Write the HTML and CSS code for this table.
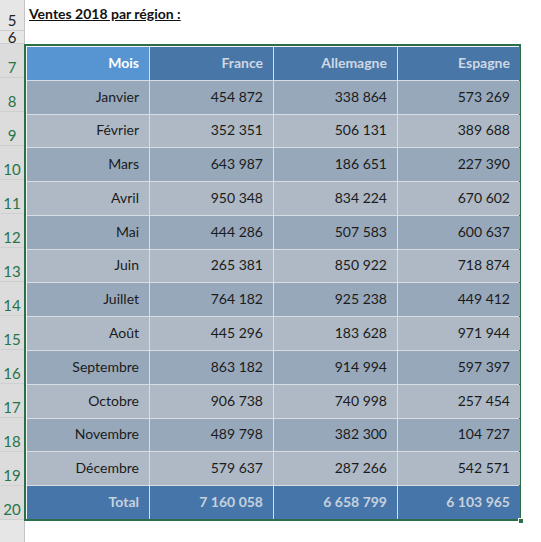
FILE: index.html
```html
<!DOCTYPE html>
<html lang="fr">
<head>
<meta charset="utf-8">
<title>Ventes 2018 par région</title>
<link rel="stylesheet" href="styles.css">
</head>
<body>
<div class="sheet">
  <div class="rowheads">
    <div class="rh r5">5</div>
    <div class="rh r6">6</div>
    <div class="rh sel r7">7</div>
    <div class="rh sel">8</div>
    <div class="rh sel">9</div>
    <div class="rh sel">10</div>
    <div class="rh sel">11</div>
    <div class="rh sel">12</div>
    <div class="rh sel">13</div>
    <div class="rh sel">14</div>
    <div class="rh sel">15</div>
    <div class="rh sel">16</div>
    <div class="rh sel">17</div>
    <div class="rh sel">18</div>
    <div class="rh sel">19</div>
    <div class="rh sel">20</div>
    <div class="rh r21">21</div>
  </div>
  <div class="main">
    <div class="title-row"><span class="title">Ventes 2018 par région :</span></div>
    <div class="blank-row"></div>
    <div class="table-wrap">
      <div class="table">
        <div class="c h first">Mois</div><div class="c h">France</div><div class="c h">Allemagne</div><div class="c h">Espagne</div>
        <div class="c odd">Janvier</div><div class="c odd">454 872</div><div class="c odd">338 864</div><div class="c odd">573 269</div>
        <div class="c even">Février</div><div class="c even">352 351</div><div class="c even">506 131</div><div class="c even">389 688</div>
        <div class="c odd">Mars</div><div class="c odd">643 987</div><div class="c odd">186 651</div><div class="c odd">227 390</div>
        <div class="c even">Avril</div><div class="c even">950 348</div><div class="c even">834 224</div><div class="c even">670 602</div>
        <div class="c odd">Mai</div><div class="c odd">444 286</div><div class="c odd">507 583</div><div class="c odd">600 637</div>
        <div class="c even">Juin</div><div class="c even">265 381</div><div class="c even">850 922</div><div class="c even">718 874</div>
        <div class="c odd">Juillet</div><div class="c odd">764 182</div><div class="c odd">925 238</div><div class="c odd">449 412</div>
        <div class="c even">Août</div><div class="c even">445 296</div><div class="c even">183 628</div><div class="c even">971 944</div>
        <div class="c odd">Septembre</div><div class="c odd">863 182</div><div class="c odd">914 994</div><div class="c odd">597 397</div>
        <div class="c even">Octobre</div><div class="c even">906 738</div><div class="c even">740 998</div><div class="c even">257 454</div>
        <div class="c odd">Novembre</div><div class="c odd">489 798</div><div class="c odd">382 300</div><div class="c odd">104 727</div>
        <div class="c even">Décembre</div><div class="c even">579 637</div><div class="c even">287 266</div><div class="c even">542 571</div>
        <div class="c t">Total</div><div class="c t">7 160 058</div><div class="c t">6 658 799</div><div class="c t">6 103 965</div>
      </div>
      <div class="handle"></div>
    </div>
  </div>
</div>
</body>
</html>
```

FILE: styles.css
```css
* { box-sizing: border-box; }
html, body {
  margin: 0;
  padding: 0;
  background: #ffffff;
  overflow: hidden;
}
body {
  font-family: Lato, "Open Sans", "Liberation Sans", sans-serif;
  font-size: 14px;
  color: #1b1b1b;
}
.sheet {
  display: flex;
  width: 541px;
  height: 542px;
}
.rowheads {
  width: 25px;
  flex: none;
  display: flex;
  flex-direction: column;
  background: #e6e6e6;
  border-right: 1px solid #c4c4c4;
}
.rh {
  height: 34px;
  flex: none;
  display: flex;
  align-items: flex-end;
  justify-content: center;
  padding-bottom: 1px;
  border-bottom: 1px solid #cfcfcf;
  color: #222;
  font-size: 15px;
  line-height: 18px;
}
.rh.r5 { height: 31px; }
.rh.r6 { height: 13px; overflow: hidden; align-items: flex-start; line-height: 12px; padding-bottom: 0; }
.rh.r7 { height: 34px; }
.rh.sel { background: #dcdcdc; color: #26744a; }
.rh.r21 { height: 34px; border-bottom: none; align-items: flex-start; padding-top: 20px; }

.main {
  flex: 1;
  display: flex;
  flex-direction: column;
}
.title-row {
  height: 31px;
  padding: 5px 0 0 4px;
}
.title {
  font-weight: bold;
  text-decoration: underline;
  font-size: 14px;
  color: #111;
}
.blank-row { height: 13px; }

.table-wrap {
  position: relative;
  width: 497px;
  height: 477px;
  margin-left: -1px;
  border: 2px solid #2a6f47;
  padding: 1px 0 0 1px;
  background: #f2f4f6;
}
.table {
  width: 100%;
  height: 100%;
  display: grid;
  grid-template-columns: 122px 123px 123px 122px;
  grid-template-rows: repeat(14, 1fr);
  gap: 1px;
  background: #d8dde3;
}
.c {
  display: flex;
  align-items: flex-end;
  justify-content: flex-end;
  padding: 0 10px 8px 0;
  line-height: 18px;
  white-space: nowrap;
}
.h { background: #4876a7; color: #cfd8e3; font-weight: bold; }
.h.first { background: #5694d2; color: #ffffff; }
.odd { background: #97a8bb; }
.even { background: #aeb9c5; }
.t { background: #4676a9; color: #c7d1de; font-weight: bold; }

.handle {
  position: absolute;
  right: -5px;
  bottom: -5px;
  width: 6px;
  height: 6px;
  background: #2a6f47;
  border: 1px solid #ffffff;
}
```
